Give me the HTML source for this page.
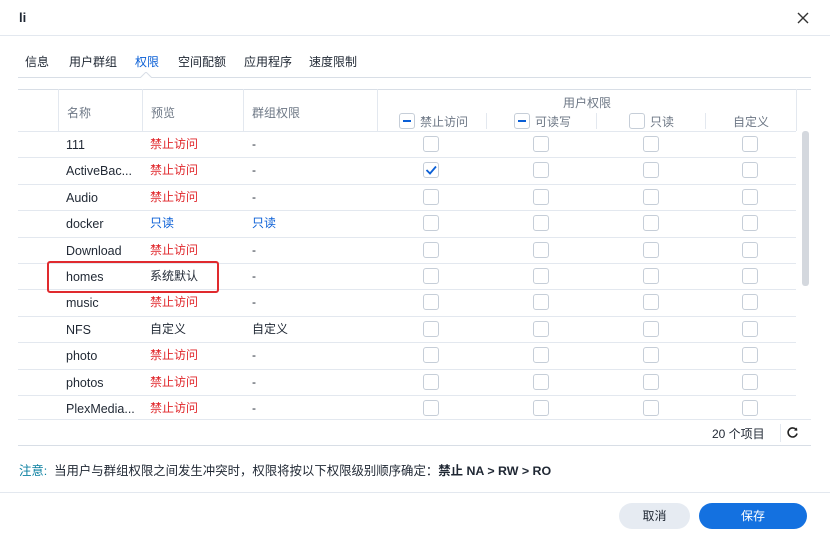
<!DOCTYPE html>
<html><head><meta charset="utf-8"><style>
*{margin:0;padding:0;box-sizing:border-box}
body{width:830px;height:536px;background:#fff;font-family:"Liberation Sans","Noto Sans CJK SC",sans-serif;font-size:12px;color:#1f2733;position:relative;overflow:hidden}
.a{position:absolute;white-space:nowrap}
.c{position:absolute;white-space:nowrap;height:26px;line-height:26px}
.hl{position:absolute;height:1px;background:#e3e8ef}
.vl{position:absolute;width:1px;background:#e3e8ef}
.cb{position:absolute;width:16px;height:16px;border:1px solid #c6ced8;border-radius:3px;background:#fff}
.red{color:#e0262a}.blue{color:#0a5fd6}
.gh{color:#6d7785}
</style></head><body>
<div class="a" style="left:19px;top:10px;font-size:13px;font-weight:bold">li</div>
<svg class="a" style="left:797px;top:12px" width="12" height="12" viewBox="0 0 12 12"><path d="M1 1L11 11M11 1L1 11" stroke="#333" stroke-width="1.4"/></svg>
<div class="hl" style="left:0;top:35px;width:830px"></div>
<div class="a" style="left:25px;top:53px">信息</div>
<div class="a" style="left:69px;top:53px">用户群组</div>
<div class="a blue" style="left:135px;top:53px">权限</div>
<div class="a" style="left:178px;top:53px">空间配额</div>
<div class="a" style="left:244px;top:53px">应用程序</div>
<div class="a" style="left:309px;top:53px">速度限制</div>
<div class="hl" style="left:18px;top:77px;width:793px;background:#d8dee6"></div>
<svg class="a" style="left:140px;top:72px" width="12" height="6"><path d="M0 6L6 0L12 6" fill="#fff" stroke="#d8dee6"/></svg>
<div class="hl" style="left:18px;top:89px;width:793px;background:#d8dee6"></div>
<div class="vl" style="left:58px;top:89px;height:42px"></div>
<div class="vl" style="left:142px;top:89px;height:42px"></div>
<div class="vl" style="left:243px;top:89px;height:42px"></div>
<div class="vl" style="left:377px;top:89px;height:42px"></div>
<div class="vl" style="left:796px;top:89px;height:42px"></div>
<div class="a gh" style="left:67px;top:104px">名称</div>
<div class="a gh" style="left:151px;top:104px">预览</div>
<div class="a gh" style="left:252px;top:104px">群组权限</div>
<div class="a gh" style="left:563px;top:94px">用户权限</div>
<div class="cb" style="left:399px;top:113px"><div style="position:absolute;left:3px;top:6px;width:8px;height:2px;background:#0a5fd6"></div></div>
<div class="a gh" style="left:420px;top:113px">禁止访问</div>
<div class="vl" style="left:486px;top:113px;height:16px"></div>
<div class="cb" style="left:514px;top:113px"><div style="position:absolute;left:3px;top:6px;width:8px;height:2px;background:#0a5fd6"></div></div>
<div class="a gh" style="left:535px;top:113px">可读写</div>
<div class="vl" style="left:596px;top:113px;height:16px"></div>
<div class="cb" style="left:629px;top:113px"></div>
<div class="a gh" style="left:650px;top:113px">只读</div>
<div class="vl" style="left:705px;top:113px;height:16px"></div>
<div class="a gh" style="left:733px;top:113px">自定义</div>
<div class="hl" style="left:18px;top:131px;width:778px"></div>
<div id="rows"></div>
<div class="a" style="left:802px;top:131px;width:7px;height:155px;background:#d4d8de;border-radius:3px"></div>
<div class="hl" style="left:18px;top:419px;width:793px"></div>
<div class="a" style="left:712px;top:425px">20 个项目</div>
<div class="vl" style="left:780px;top:424px;height:18px"></div>
<svg class="a" style="left:786px;top:426px" width="13" height="13" viewBox="0 0 13 13"><path d="M10.5 4.2A4.5 4.5 0 1 0 11 7.5" fill="none" stroke="#222" stroke-width="1.6"/><path d="M8 4.5L11.3 4.8L11 1.5Z" fill="#222"/></svg>
<div class="hl" style="left:18px;top:445px;width:793px;background:#d8dee6"></div>
<div class="a" style="left:19px;top:461px;font-size:12.4px"><span style="color:#0a7fa0">注意:</span>&nbsp;&nbsp;当用户与群组权限之间发生冲突时，权限将按以下权限级别顺序确定：<b>禁止 NA &gt; RW &gt; RO</b></div>
<div class="hl" style="left:0;top:492px;width:830px"></div>
<div class="a" style="left:619px;top:503px;width:71px;height:26px;border-radius:13px;background:#e6ebf2;text-align:center;line-height:26px">取消</div>
<div class="a" style="left:699px;top:503px;width:108px;height:26px;border-radius:13px;background:#1471e0;color:#fff;text-align:center;line-height:26px">保存</div>
<div class="a" style="left:47px;top:261px;width:172px;height:32px;border:2px solid #e02a2e;border-radius:3px"></div>
<script>
var d=[["111","禁止访问","-"],["ActiveBac...","禁止访问","-"],["Audio","禁止访问","-"],["docker","只读","只读"],["Download","禁止访问","-"],["homes","系统默认","-"],["music","禁止访问","-"],["NFS","自定义","自定义"],["photo","禁止访问","-"],["photos","禁止访问","-"],["PlexMedia...","禁止访问","-"]];
var h="";
d.forEach(function(r,i){var y=131+i*26.4;
var pc=r[1]=="禁止访问"?"red":r[1]=="只读"?"blue":"";
var gc=r[2]=="只读"?"blue":"";
h+='<div class="c" style="left:66px;top:'+(y+1)+'px;font-size:12.5px">'+r[0]+'</div>';
h+='<div class="c '+pc+'" style="left:150px;top:'+(y)+'px">'+r[1]+'</div>';
h+='<div class="c '+gc+'" style="left:252px;top:'+(y)+'px">'+r[2]+'</div>';
[423,533,643,742].forEach(function(x,j){h+='<div class="cb" style="left:'+x+'px;top:'+(y+5)+'px">'+(i==1&&j==0?'<svg width="14" height="14" style="position:absolute;left:0;top:0"><path d="M2.5 7L6 10.5L12 3.5" fill="none" stroke="#0a5fd6" stroke-width="1.8"/></svg>':'')+'</div>'});
if(i<10)h+='<div class="hl" style="left:18px;top:'+(y+26.4)+'px;width:778px"></div>';
});
document.getElementById("rows").innerHTML=h;
</script>
</body></html>
